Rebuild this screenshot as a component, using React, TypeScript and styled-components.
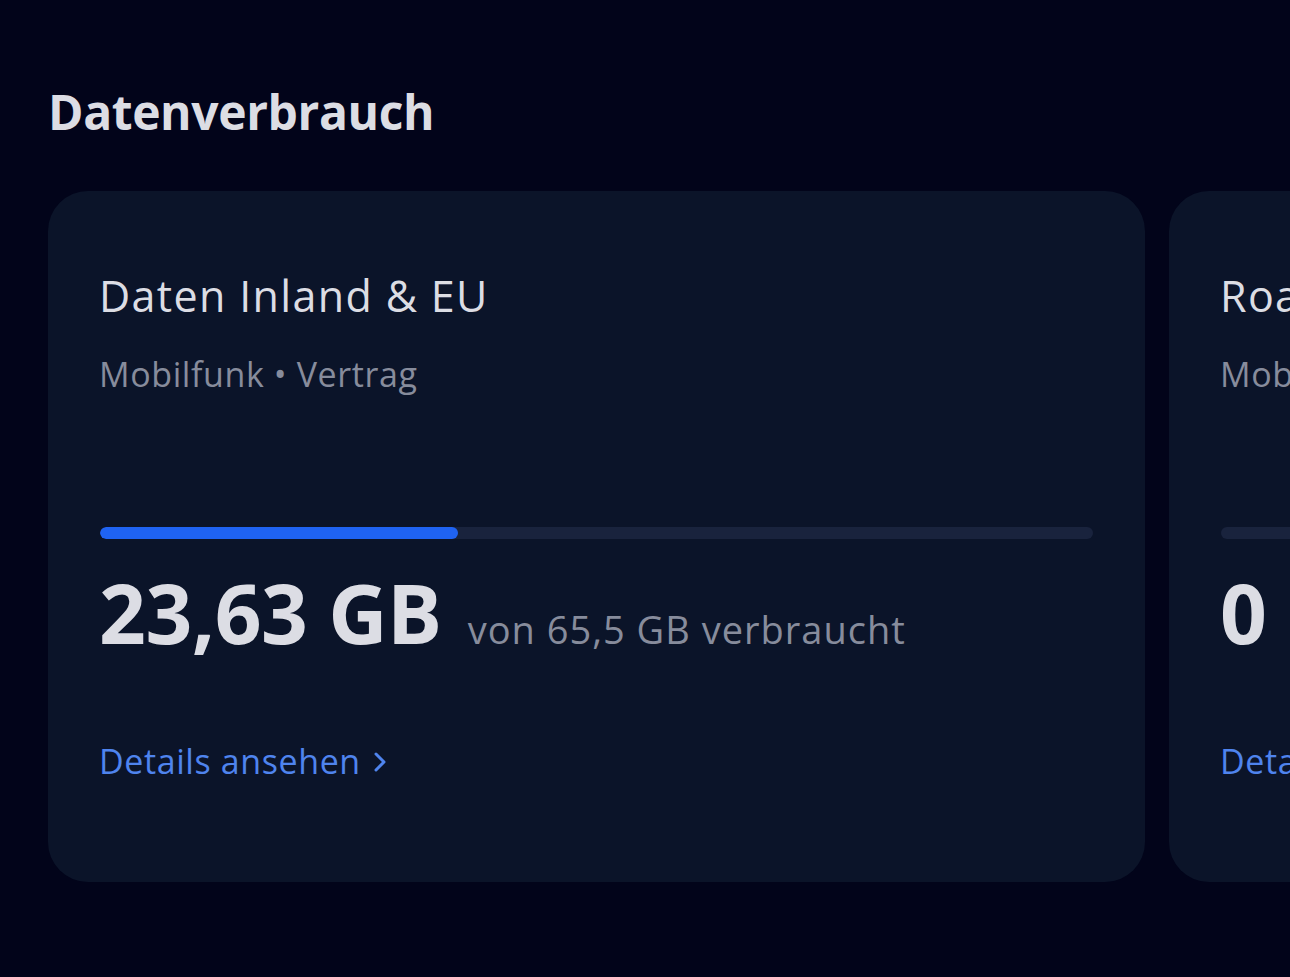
import styled, { createGlobalStyle } from "styled-components";

const GlobalStyle = createGlobalStyle`
	html, body {
		margin: 0;
		padding: 0;
		background-color: #02041a;
	}
	body {
		font-family: "Open Sans", "Noto Sans", sans-serif;
		color: #dcdde4;
	}
`

const Page = styled.div`
	width: 1290px;
	height: 977px;
	overflow: hidden;
	background-color: #02041a;
	padding-top: 80px;
	box-sizing: border-box;
`

const Heading = styled.h1`
	margin: 0 0 0 48px;
	font-size: 48px;
	line-height: 64px;
	font-weight: 700;
	color: #dcdde4;
	letter-spacing: -0.4px;
`

const Carousel = styled.div`
	display: flex;
	gap: 24px;
	margin-top: 47px;
	padding-left: 48px;
`

const Card = styled.div`
	flex: 0 0 1097px;
	height: 691px;
	box-sizing: border-box;
	padding: 83px 52px 0 51px;
	background-color: #0b1429;
	border-radius: 40px;
	display: flex;
	flex-direction: column;
`

const CardTitle = styled.h2`
	margin: 0;
	font-size: 43px;
	line-height: 43px;
	font-weight: 500;
	letter-spacing: 1.35px;
	color: #dcdde4;
	white-space: nowrap;
`

const CardSub = styled.div`
	margin-top: 40px;
	font-size: 34px;
	line-height: 35px;
	letter-spacing: 0.6px;
	color: #878c9c;
	white-space: nowrap;
`

const Track = styled.div`
	margin-top: 135px;
	margin-left: 1px;
	height: 12px;
	border-radius: 6px;
	background-color: #19233d;
	overflow: hidden;
`

const Fill = styled.div`
	height: 100%;
	border-radius: 6px;
	background-color: #1f63f2;
`

const UsageRow = styled.div`
	margin-top: 31px;
	display: flex;
	align-items: baseline;
	gap: 26px;
	white-space: nowrap;
`

const Amount = styled.span`
	font-size: 82px;
	line-height: 84px;
	font-weight: 700;
	color: #dcdde4;
	letter-spacing: -0.5px;
`

const Total = styled.span`
	font-size: 38px;
	letter-spacing: 1px;
	color: #878c9c;
`

const DetailsLink = styled.a`
	margin-top: 89px;
	display: inline-flex;
	align-items: center;
	gap: 12px;
	font-size: 34px;
	line-height: 35px;
	font-weight: 500;
	letter-spacing: 0.6px;
	color: #4f84ee;
	text-decoration: none;
	cursor: pointer;
	white-space: nowrap;
`

type Usage = {
	title: string
	sub: string
	used: number
	total: number
	amount: string
	totalText: string
}

const items: Usage[] = [
	{ title: "Daten Inland & EU", sub: "Mobilfunk • Vertrag", used: 23.63, total: 65.5, amount: "23,63 GB", totalText: "von 65,5 GB verbraucht" },
	{ title: "Roaming", sub: "Mobilfunk • Vertrag", used: 0, total: 10, amount: "0 GB", totalText: "von 10 GB verbraucht" },
]

function Chevron() {
	return (
		<svg width="14" height="24" viewBox="0 0 14 24" fill="none">
			<path d="M3 4 L11 12 L3 20" stroke="#4f84ee" strokeWidth="3" strokeLinecap="round" strokeLinejoin="round" />
		</svg>
	)
}

export default function App() {
	return (
		<>
			<GlobalStyle />
			<Page>
				<Heading>Datenverbrauch</Heading>
				<Carousel>
					{items.map((item) => (
						<Card key={item.title}>
							<CardTitle>{item.title}</CardTitle>
							<CardSub>{item.sub}</CardSub>
							<Track>
								<Fill style={{ width: `${(item.used / item.total) * 100}%` }} />
							</Track>
							<UsageRow>
								<Amount>{item.amount}</Amount>
								<Total>{item.totalText}</Total>
							</UsageRow>
							<div>
								<DetailsLink>
									Details ansehen
									<Chevron />
								</DetailsLink>
							</div>
						</Card>
					))}
				</Carousel>
			</Page>
		</>
	);
}
